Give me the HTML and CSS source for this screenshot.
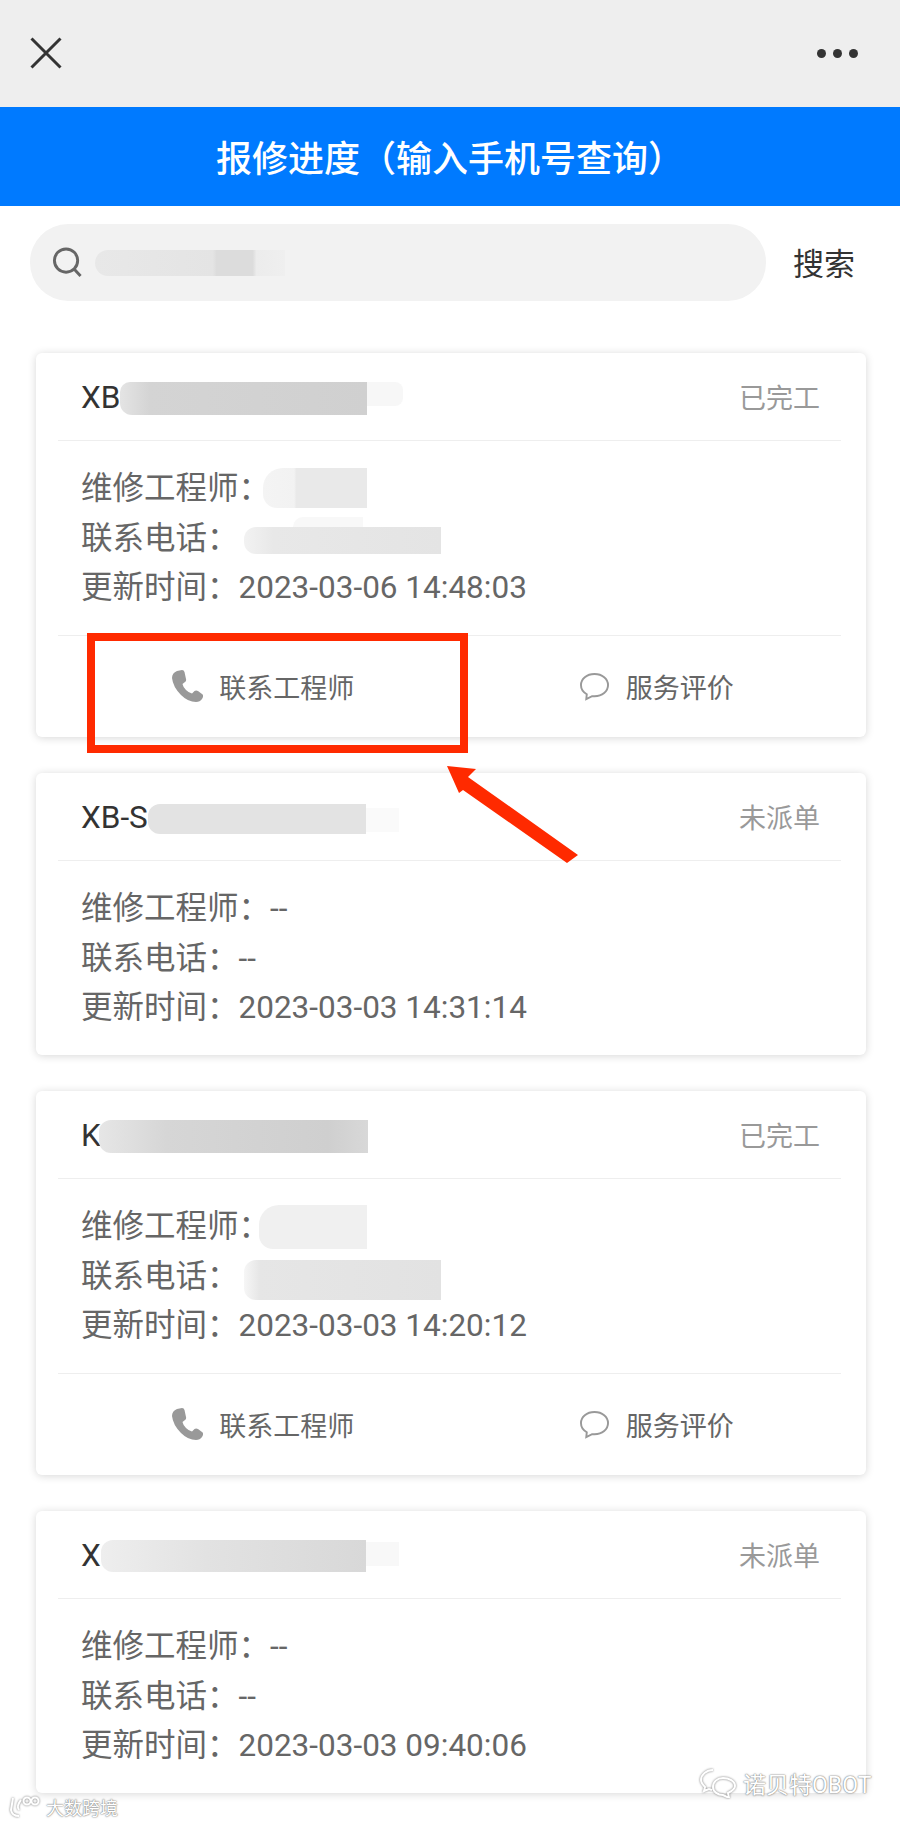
FILE: index.html
```html
<!DOCTYPE html>
<html lang="zh-CN">
<head>
  <meta charset="UTF-8">
  <meta name="viewport" content="width=device-width, initial-scale=1.0">
  <title>报修进度</title>
  <link rel="stylesheet" href="styles.css">
</head>
<body>
<div class="page">

  <div class="topbar">
    <svg class="close-icon" viewBox="0 0 32 32"><path d="M1.5 1.5 L30.5 30.5 M30.5 1.5 L1.5 30.5"/></svg>
    <div class="more-dots"><i></i><i></i><i></i></div>
  </div>

  <div class="title-bar">报修进度（输入手机号查询）</div>

  <div class="search-row">
    <div class="search-box">
      <svg class="search-icon" viewBox="0 0 32 32"><circle cx="14.5" cy="14" r="12"/><path d="M23 23 L29.5 30"/></svg>
      <span class="smear smear-search"></span>
    </div>
    <span class="search-btn">搜索</span>
  </div>

  <div class="card-list">

    <div class="card">
      <div class="card-head">
        <span class="order-no">XB<span class="smear smear-t1"></span></span>
        <span class="status">已完工</span>
      </div>
      <div class="card-body">
        <div class="row">维修工程师：<span class="smear smear-name1"></span></div>
        <div class="row">联系电话：<span class="smear smear-phone1"></span></div>
        <div class="row">更新时间：2023-03-06 14:48:03</div>
      </div>
      <div class="card-foot">
        <a class="action">
          <svg class="phone-icon" viewBox="0 0 32 32"><path d="M6 1 L11 0 Q13 0 13.5 2 L15 9 Q15.5 11 14 12 L11.5 14 Q12 17 15 20 Q18 23 21 23.5 L23.5 21 Q25 20 27 21 L31 24 Q32.5 25 32 27 L31 29 Q29 32 25 32 Q17 32 10 25 Q2 17 1 8 Q1 3 6 1Z"/></svg>
          联系工程师
        </a>
        <a class="action">
          <svg class="comment-icon" viewBox="0 0 32 30"><path d="M16 2 C8 2 2 7 2 13.5 C2 17.5 4.5 21 8 23 L7.5 28 L13.5 25 Q15 25 16 25 C24 25 30 20 30 13.5 C30 7 24 2 16 2Z"/></svg>
          服务评价
        </a>
      </div>
    </div>

    <div class="card">
      <div class="card-head">
        <span class="order-no">XB-S<span class="smear smear-t2"></span></span>
        <span class="status">未派单</span>
      </div>
      <div class="card-body">
        <div class="row">维修工程师：--</div>
        <div class="row">联系电话：--</div>
        <div class="row">更新时间：2023-03-03 14:31:14</div>
      </div>
    </div>

    <div class="card">
      <div class="card-head">
        <span class="order-no">K<span class="smear smear-t3"></span></span>
        <span class="status">已完工</span>
      </div>
      <div class="card-body">
        <div class="row">维修工程师：<span class="smear smear-name3"></span></div>
        <div class="row">联系电话：<span class="smear smear-phone3"></span></div>
        <div class="row">更新时间：2023-03-03 14:20:12</div>
      </div>
      <div class="card-foot">
        <a class="action">
          <svg class="phone-icon" viewBox="0 0 32 32"><path d="M6 1 L11 0 Q13 0 13.5 2 L15 9 Q15.5 11 14 12 L11.5 14 Q12 17 15 20 Q18 23 21 23.5 L23.5 21 Q25 20 27 21 L31 24 Q32.5 25 32 27 L31 29 Q29 32 25 32 Q17 32 10 25 Q2 17 1 8 Q1 3 6 1Z"/></svg>
          联系工程师
        </a>
        <a class="action">
          <svg class="comment-icon" viewBox="0 0 32 30"><path d="M16 2 C8 2 2 7 2 13.5 C2 17.5 4.5 21 8 23 L7.5 28 L13.5 25 Q15 25 16 25 C24 25 30 20 30 13.5 C30 7 24 2 16 2Z"/></svg>
          服务评价
        </a>
      </div>
    </div>

    <div class="card">
      <div class="card-head">
        <span class="order-no">X<span class="smear smear-t4"></span></span>
        <span class="status">未派单</span>
      </div>
      <div class="card-body">
        <div class="row">维修工程师：--</div>
        <div class="row">联系电话：--</div>
        <div class="row">更新时间：2023-03-03 09:40:06</div>
      </div>
    </div>

  </div>

  <!-- annotation drawn over the screenshot -->
  <div class="red-box"></div>
  <svg class="red-arrow" viewBox="0 0 140 105"><polygon points="2,1 31,4 23,12 133,90 122,98 18,25 14,28"/></svg>

  <!-- watermarks -->
  <div class="mark mark-wechat">
    <svg class="mark-icon" viewBox="0 0 36 30"><path d="M13 2 C6 2 1 7 1 12 C1 15 3 17 5 19 L4 23 L9 21 L12 22 M23 10 C17 10 13 14 13 19 C13 24 18 27 23 27 L29 30 L28 25 C32 23 35 21 35 18 C35 13 29 10 23 10Z"/></svg>
    <span>诺贝特OBOT</span>
  </div>
  <div class="mark mark-site">
    <svg class="site-icon" viewBox="0 0 32 22"><path d="M4 2 L2 14 Q3 20 10 20 M12 4 Q7 10 10 14"/><circle cx="18" cy="5" r="3.5"/><circle cx="26" cy="5" r="3.5"/></svg>
    <span>大数跨境</span>
  </div>

</div>
</body>
</html>
```
FILE: styles.css
```css
* { box-sizing: border-box; }
html, body { margin: 0; padding: 0; background: #fff; }
body { font-family: Roboto, "Noto Sans CJK SC", sans-serif; color: #666; }

.page { position: relative; width: 900px; height: 1822px; overflow: hidden; }

/* top bars */
.topbar { height: 107px; background: #eeeeee; display: flex; align-items: center; justify-content: space-between; padding: 0 42px 1px 30px; }
.close-icon { width: 32px; height: 32px; fill: none; stroke: #333; stroke-width: 3; }
.more-dots { display: flex; gap: 7px; }
.more-dots i { width: 9px; height: 9px; border-radius: 50%; background: #333; }
.title-bar { height: 99px; background: #007aff; color: #fff; font-size: 36px; font-weight: 500; display: flex; align-items: center; justify-content: center; padding-bottom: 2px; }

/* search */
.search-row { display: flex; align-items: center; margin-top: 18px; padding: 0 45px 0 30px; justify-content: space-between; }
.search-box { width: 736px; height: 77px; background: #f2f2f2; border-radius: 38px; display: flex; align-items: center; padding-left: 22px; }
.search-icon { width: 31px; height: 31px; fill: none; stroke: #666; stroke-width: 3; }
.search-btn { font-size: 31px; color: #333; margin-top: -2px; }

/* cards */
.card-list { display: flex; flex-direction: column; gap: 36.5px; margin-top: 52px; padding: 0 34px 0 36px; }
.card { background: #fff; border-radius: 6px; box-shadow: 0 1px 8px rgba(0, 0, 0, .16); padding: 0 25px 0 22px; }
.card-head { height: 88px; border-bottom: 1px solid #eee; display: flex; align-items: center; justify-content: space-between; padding: 0 21px 0 23px; }
.order-no { font-size: 31.5px; color: #333; display: flex; align-items: center; padding-top: 1px; }
.status { font-size: 27px; color: #999; }
.card-body { padding: 23px 0 22px 23px; }
.row { height: 49.5px; line-height: 49.5px; font-size: 31.5px; color: #666; white-space: nowrap; display: flex; align-items: center; }
.card-foot { height: 102px; border-top: 1px solid #eee; display: flex; }
.action { flex: 1; display: flex; align-items: center; justify-content: center; gap: 16px; font-size: 27px; color: #666; }
.action:first-child { padding-left: 20px; }
.action:last-child { padding-left: 24px; }
.phone-icon { width: 32px; height: 32px; fill: #999; }
.comment-icon { width: 31px; height: 29px; fill: none; stroke: #999; stroke-width: 2; }

/* smudged out text */
.smear { display: block; position: relative; flex: none; }
.smear::after { content: ""; position: absolute; }
.smear-search { width: 190px; height: 26px; margin-left: 12px; border-radius: 13px 0 0 13px; background: linear-gradient(90deg, #e8e8e8 0, #e4e4e4 62%, #dcdcdc 64%, #dcdcdc 83%, #ececec 85%, #efefef 100%); }
.smear-t1 { width: 247px; height: 33px; margin-top: 3px; border-radius: 10px 0 0 12px; background: linear-gradient(90deg, #e4e4e4 0, #d4d4d4 12%, #d0d0d0 100%); }
.smear-t1::after { left: 100%; top: 0; width: 36px; height: 24px; background: #f7f7f7; border-radius: 0 8px 8px 0; }
.smear-t2 { width: 218px; height: 30px; margin-top: 3px; border-radius: 12px 0 0 12px; background: #e3e3e3; }
.smear-t2::after { left: 100%; top: 4px; width: 33px; height: 24px; background: #fafafa; }
.smear-t3 { width: 269px; height: 33px; margin-left: -2px; margin-top: 2px; border-radius: 12px 0 0 12px; background: linear-gradient(90deg, #e6e6e6 0, #d6d6d6 25%, #cfcfcf 85%, #d8d8d8 100%); }
.smear-t4 { width: 265px; height: 32px; margin-top: 2px; border-radius: 12px 0 0 12px; background: linear-gradient(90deg, #eeeeee 0, #e2e2e2 40%, #d8d8d8 100%); }
.smear-t4::after { left: 100%; top: 2px; width: 33px; height: 24px; background: #f8f8f8; }
.smear-name1 { width: 104px; height: 40px; margin-left: -7px; margin-top: -2px; border-radius: 20px 0 0 14px; background: linear-gradient(90deg, #f4f4f4 0, #f2f2f2 30%, #e9e9e9 32%, #e9e9e9 100%); }
.smear-phone1 { width: 197px; height: 27px; margin-left: 5px; margin-top: 4px; border-radius: 12px 0 0 12px; background: linear-gradient(90deg, #f2f2f2 0, #e8e8e8 15%, #e4e4e4 100%); }
.smear-phone1::after { left: 25%; bottom: 100%; width: 70px; height: 10px; background: #f8f8f8; border-radius: 10px 0 0 0; }
.smear-name3 { width: 108px; height: 44px; margin-left: -11px; border-radius: 20px 0 0 14px; background: #f0f0f0; }
.smear-phone3 { width: 197px; height: 40px; margin-left: 5px; margin-top: 8px; border-radius: 12px 0 0 12px; background: linear-gradient(90deg, #f6f6f6 0, #e6e6e6 8%, #e2e2e2 100%); }

/* annotation */
.red-box { position: absolute; left: 87px; top: 633px; width: 381px; height: 120px; border: 8px solid #ff2a00; }
.red-arrow { position: absolute; left: 445px; top: 765px; width: 140px; height: 105px; fill: #ff2a00; }

/* watermarks */
.mark { position: absolute; display: flex; align-items: center; color: #fff; text-shadow: 0 0 2px #777, 0 0 1px #777; }
.mark-wechat { left: 700px; top: 1766px; gap: 7px; font-size: 23px; }
.mark-icon { width: 36px; height: 30px; fill: none; stroke: #fff; stroke-width: 2; filter: drop-shadow(0 0 1px #777); }
.mark-site { left: 9px; top: 1794px; gap: 5px; font-size: 18px; }
.site-icon { width: 32px; height: 22px; fill: none; stroke: #fff; stroke-width: 2; filter: drop-shadow(0 0 1px #777); }
```
